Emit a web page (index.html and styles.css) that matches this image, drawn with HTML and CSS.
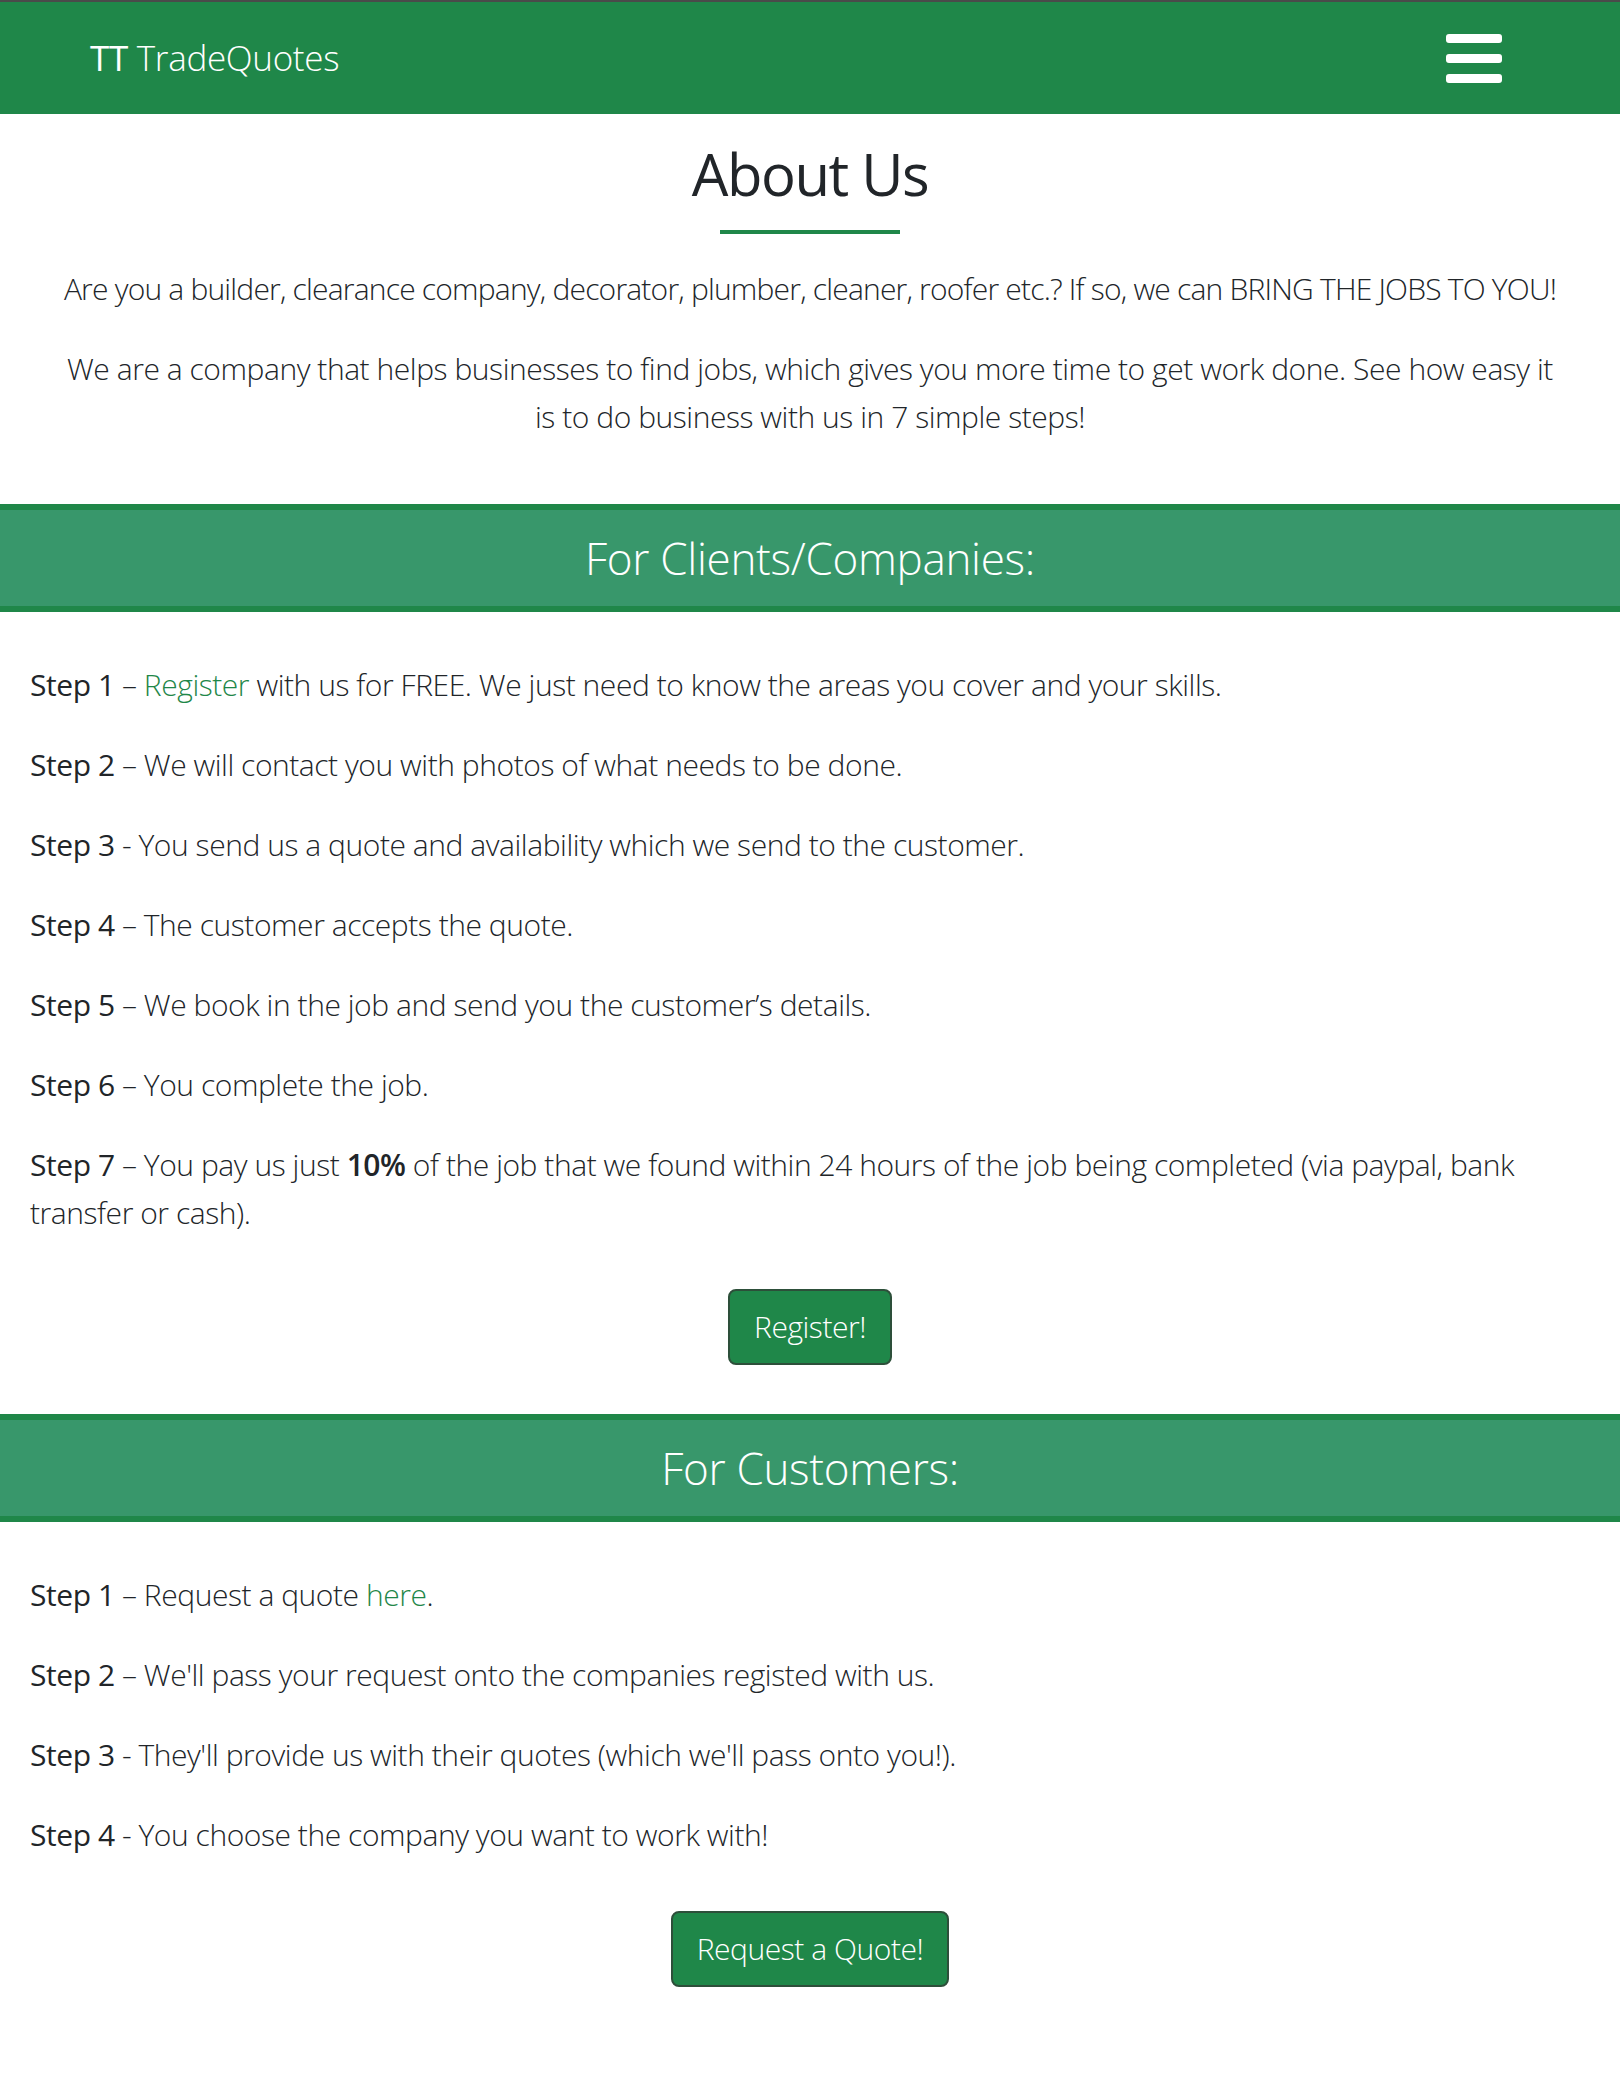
FILE: index.html
```html
<!DOCTYPE html>
<html lang="en">
<head>
<meta charset="utf-8">
<title>About Us - TT TradeQuotes</title>
<link rel="stylesheet" href="styles.css">
</head>
<body>
<nav class="navbar">
  <a class="brand" href="#"><span class="brand-tt">TT</span> TradeQuotes</a>
  <button class="menu-toggle" aria-label="Menu">
    <svg width="56" height="49" viewBox="0 0 56 49">
      <rect x="0" y="0" width="56" height="9" rx="3" fill="#fff"/>
      <rect x="0" y="20" width="56" height="9" rx="3" fill="#fff"/>
      <rect x="0" y="40" width="56" height="9" rx="3" fill="#fff"/>
    </svg>
  </button>
</nav>

<section class="about">
  <h1 class="about-title">About Us</h1>
  <div class="about-rule"></div>
  <p class="lead">Are you a builder, clearance company, decorator, plumber, cleaner, roofer etc.? If so, we can BRING THE JOBS TO YOU!</p>
  <p>We are a company that helps businesses to find jobs, which gives you more time to get work done. See how easy it is to do business with us in 7 simple steps!</p>
</section>

<h2 class="section-head">For Clients/Companies:</h2>
<section class="steps">
  <p><span class="step">Step 1</span> – <a href="#">Register</a> with us for FREE. We just need to know the areas you cover and your skills.</p>
  <p><span class="step">Step 2</span> – We will contact you with photos of what needs to be done.</p>
  <p><span class="step">Step 3</span> - You send us a quote and availability which we send to the customer.</p>
  <p><span class="step">Step 4</span> – The customer accepts the quote.</p>
  <p><span class="step">Step 5</span> – We book in the job and send you the customer’s details.</p>
  <p><span class="step">Step 6</span> – You complete the job.</p>
  <p><span class="step">Step 7</span> – You pay us just <strong>10%</strong> of the job that we found within 24 hours of the job being completed (via paypal, bank transfer or cash).</p>
  <div class="btn-row"><a class="btn" href="#">Register!</a></div>
</section>

<h2 class="section-head">For Customers:</h2>
<section class="steps">
  <p><span class="step">Step 1</span> – Request a quote <a href="#">here</a>.</p>
  <p><span class="step">Step 2</span> – We'll pass your request onto the companies registed with us.</p>
  <p><span class="step">Step 3</span> - They'll provide us with their quotes (which we'll pass onto you!).</p>
  <p><span class="step">Step 4</span> - You choose the company you want to work with!</p>
  <div class="btn-row"><a class="btn" href="#">Request a Quote!</a></div>
</section>
</body>
</html>
```

FILE: styles.css
```css
* { box-sizing: border-box; }

body {
  margin: 0;
  font-family: "Open Sans", "Noto Sans", sans-serif;
  font-weight: 300;
  font-size: 30px;
  letter-spacing: -0.45px;
  line-height: 48px;
  color: #212529;
  background: #fff;
}

a { color: #1f8749; text-decoration: none; }

.navbar {
  display: flex;
  align-items: center;
  justify-content: space-between;
  height: 114px;
  border-top: 2px solid #4a4a4a;
  background: #1f8749;
  padding: 0 118px 0 90px;
}

.brand {
  color: #fff;
  font-size: 35px;
  font-weight: 300;
  line-height: 48px;
  letter-spacing: -0.3px;
}
.brand-tt { font-weight: 400; }

.menu-toggle {
  display: flex;
  padding: 0;
  margin: 0;
  border: 0;
  background: none;
}

.about {
  text-align: center;
  padding: 21px 62px 31px;
}

.about-title {
  margin: 0;
  font-size: 58px;
  font-weight: 400;
  line-height: 77px;
  letter-spacing: -1.5px;
}

.about-rule {
  width: 180px;
  height: 4px;
  background: #1f8749;
  margin: 18px auto 31px;
}

.about p { margin: 0 0 32px; }
.about .lead { letter-spacing: -0.8px; }

.section-head {
  margin: 0;
  border-top: 6px solid #1f8749;
  border-bottom: 6px solid #1f8749;
  background: #38976b;
  color: #fff;
  text-align: center;
  font-size: 44px;
  font-weight: 300;
  letter-spacing: -0.3px;
  line-height: 58px;
  padding: 19px 0;
}

.steps {
  padding: 49px 30px 49px;
}

.steps p { margin: 0 0 32px; }

.step { font-weight: 400; }
strong { font-weight: 600; }

.btn-row {
  display: flex;
  justify-content: center;
  padding-top: 20px;
}

.btn {
  display: inline-block;
  background: #1f8749;
  color: #fff;
  border: 2px solid #2d4f3a;
  border-radius: 8px;
  padding: 12px 24px;
  font-size: 30px;
  font-weight: 300;
  line-height: 48px;
}
```
